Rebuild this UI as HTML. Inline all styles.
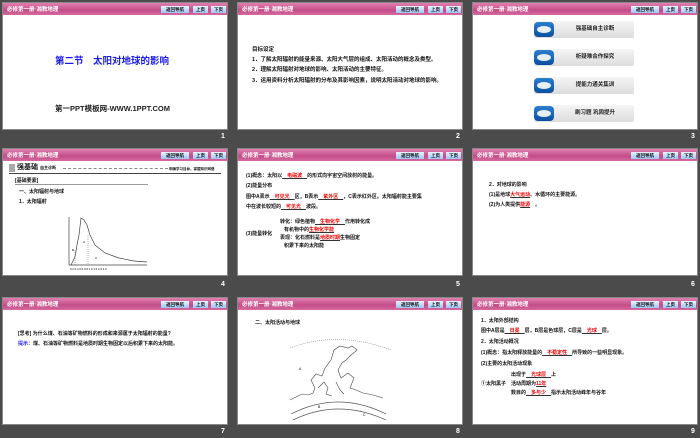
<!DOCTYPE html>
<html><head><meta charset="utf-8"><style>
*{margin:0;padding:0;box-sizing:border-box}
body{width:700px;height:438px;background:#4b4b4b;position:relative;overflow:hidden;font-family:"Liberation Sans","Noto Sans CJK SC",sans-serif}
.s{position:absolute;width:226px;height:128px;background:#fff;overflow:hidden;border:1px solid #888}
.h{position:absolute;left:0;top:0;width:100%;height:12px;background:linear-gradient(#e27fb0,#c24d88 60%,#d76aa1);}
.h .t{position:absolute;left:4px;top:2px;font-size:5.5px;color:#fff;font-weight:bold;white-space:nowrap}
.b{position:absolute;top:3px;height:7px;background:linear-gradient(#eaf3ff,#9cc4f2);font-size:4.5px;line-height:7px;text-align:center;color:#111;font-weight:bold}
.n{position:absolute;color:#fff;font-size:7px;font-weight:bold}
.x{position:absolute;font-size:5px;color:#111;white-space:nowrap;font-weight:bold;line-height:6px}
.r{color:#e00;text-decoration:underline;text-decoration-color:#333}
.btn{position:absolute;left:61px;width:100px;height:17px;background:linear-gradient(#f5f5f5,#ddd);border-radius:2px;font-size:5.5px;font-weight:bold;line-height:17px;color:#222}
.btn i{position:absolute;left:0;top:1px;width:20px;height:15px;border-radius:4px;background:linear-gradient(#2b7fd0,#0d4fa0)}
.btn i:after{content:"";position:absolute;left:3px;top:4px;width:14px;height:7px;border-radius:50%;background:#e8eef6}
.btn span{position:absolute;left:22px;right:0;text-align:center}
</style></head><body>

<!-- slide 1 -->
<div class="s" style="left:2px;top:2px">
<div class="h"><div class="t">必修第一册·湘教地理</div></div>
<div class="b" style="left:158px;width:28px">返回导航</div><div class="b" style="left:190px;width:15px">上页</div><div class="b" style="left:208px;width:15px">下页</div>
<div class="x" style="left:52px;top:53px;font-size:9.5px;line-height:11px;color:#1a1aee">第二节　太阳对地球的影响</div>
<div class="x" style="left:52px;top:101px;font-size:7.5px;line-height:9px;color:#222">第一PPT模板网-WWW.1PPT.COM</div>
</div>
<div class="n" style="left:221px;top:133px">1</div>

<!-- slide 2 -->
<div class="s" style="left:237px;top:2px">
<div class="h"><div class="t">必修第一册·湘教地理</div></div>
<div class="b" style="left:158px;width:28px">返回导航</div><div class="b" style="left:190px;width:15px">上页</div><div class="b" style="left:208px;width:15px">下页</div>
<div class="x" style="left:14px;top:44px;font-size:5.5px">目标设定</div>
<div class="x" style="left:14px;top:54px;font-size:5.5px">1．了解太阳辐射的能量来源、太阳大气层的组成、太阳活动的概念及类型。</div>
<div class="x" style="left:14px;top:64px;font-size:5.5px">2．理解太阳辐射对地球的影响、太阳活动的主要特征。</div>
<div class="x" style="left:14px;top:75px;font-size:5.5px">3．运用资料分析太阳辐射的分布及其影响因素，说明太阳活动对地球的影响。</div>
</div>
<div class="n" style="left:456px;top:133px">2</div>

<!-- slide 3 -->
<div class="s" style="left:472px;top:2px">
<div class="h"><div class="t">必修第一册·湘教地理</div></div>
<div class="b" style="left:158px;width:28px">返回导航</div><div class="b" style="left:190px;width:15px">上页</div><div class="b" style="left:208px;width:15px">下页</div>
<div class="btn" style="top:18px"><i></i><span>强基础自主诊断</span></div>
<div class="btn" style="top:46px"><i></i><span>析疑难合作探究</span></div>
<div class="btn" style="top:74px"><i></i><span>提能力通关集训</span></div>
<div class="btn" style="top:102px"><i></i><span>刷习题 巩固提升</span></div>
</div>
<div class="n" style="left:691px;top:133px">3</div>

<!-- slide 4 -->
<div class="s" style="left:2px;top:148px">
<div class="h"><div class="t">必修第一册·湘教地理</div></div>
<div class="b" style="left:158px;width:28px">返回导航</div><div class="b" style="left:190px;width:15px">上页</div><div class="b" style="left:208px;width:15px">下页</div>
<div style="position:absolute;left:6px;top:15px;width:6px;height:8px;background:#aaa"></div>
<div class="x" style="left:14px;top:15px;font-size:7px;line-height:8px">强基础 <span style="font-size:4px">自主诊断</span></div>
<div style="position:absolute;left:6px;top:24px;width:212px;height:1px;background:#444"></div>
<div style="position:absolute;left:60px;top:19px;width:105px;border-top:1px dashed #888"></div>
<div class="x" style="left:166px;top:17px;font-size:3.5px">明确学习目标，掌握知识网络</div>
<div class="x" style="left:12px;top:29px">[基础要素]</div>
<div style="position:absolute;left:12px;top:35px;width:133px;height:1px;background:#999"></div>
<div class="x" style="left:16px;top:40px">一、太阳辐射与地球</div>
<div class="x" style="left:16px;top:50px">1．太阳辐射</div>
<svg style="position:absolute;left:56px;top:66px" width="100" height="60">
<path d="M10 2V50H88" stroke="#444" fill="none" stroke-width=".7"/>
<path d="M12 50 L16 42 L18 30 L20 20 L22 3 L25 5 L28 10 L31 20 L36 30 L46 38 L60 43 L75 46 L88 47" stroke="#444" fill="none" stroke-width=".7"/>
<path d="M16 35V50M29 20V50" stroke="#666" stroke-dasharray="1 1" stroke-width=".5"/>
<text x="24" y="28" font-size="3">A</text><text x="13" y="36" font-size="3">B</text><text x="36" y="44" font-size="3">C</text>
<text x="11" y="55" font-size="2.8">0.2 0.4 0.6 0.8 1.0  1.5  2.0        3.0</text>
</svg>
</div>
<div class="n" style="left:221px;top:281px">4</div>

<!-- slide 5 -->
<div class="s" style="left:237px;top:148px">
<div class="h"><div class="t">必修第一册·湘教地理</div></div>
<div class="b" style="left:158px;width:28px">返回导航</div><div class="b" style="left:190px;width:15px">上页</div><div class="b" style="left:208px;width:15px">下页</div>
<div class="x" style="left:8px;top:24px">(1)概念：太阳以<span class="r">　电磁波　</span>的形式向宇宙空间放射的能量。</div>
<div class="x" style="left:8px;top:34px">(2)能量分布</div>
<div class="x" style="left:8px;top:45px">图中A表示<span class="r">　可见光　</span>区，B表示<span class="r">　紫外区　</span>，C表示红外区。太阳辐射能主要集</div>
<div class="x" style="left:8px;top:55px">中在波长较短的<span class="r">　可见光　</span>波段。</div>
<div class="x" style="left:8px;top:82px">(3)能量转化</div>
<div class="x" style="left:42px;top:70px">转化：绿色植物<span class="r">　生物化学　</span>作用转化成</div>
<div class="x" style="left:46px;top:78px">有机物中的<span class="r">生物化学能</span></div>
<div class="x" style="left:42px;top:86px">表现：化石燃料是<span class="r">地质时期</span>生物固定</div>
<div class="x" style="left:46px;top:94px">积累下来的太阳能</div>
</div>
<div class="n" style="left:456px;top:281px">5</div>

<!-- slide 6 -->
<div class="s" style="left:472px;top:148px">
<div class="h"><div class="t">必修第一册·湘教地理</div></div>
<div class="b" style="left:158px;width:28px">返回导航</div><div class="b" style="left:190px;width:15px">上页</div><div class="b" style="left:208px;width:15px">下页</div>
<div class="x" style="left:16px;top:33px">2．对地球的影响</div>
<div class="x" style="left:16px;top:43px">(1)是地球<span class="r">大气运动</span>、水循环的主要能源。</div>
<div class="x" style="left:16px;top:53px">(2)为人类提供<span class="r">能源</span>　。</div>
</div>
<div class="n" style="left:691px;top:281px">6</div>

<!-- slide 7 -->
<div class="s" style="left:2px;top:297px">
<div class="h"><div class="t">必修第一册·湘教地理</div></div>
<div class="b" style="left:158px;width:28px">返回导航</div><div class="b" style="left:190px;width:15px">上页</div><div class="b" style="left:208px;width:15px">下页</div>
<div class="x" style="left:15px;top:33px">[思考] 为什么煤、石油等矿物燃料的形成和来源属于太阳辐射的能量?</div>
<div class="x" style="left:15px;top:43px"><span style="color:#22e">提示：</span>煤、石油等矿物燃料是地质时期生物固定以后积累下来的太阳能。</div>
</div>
<div class="n" style="left:221px;top:428px">7</div>

<!-- slide 8 -->
<div class="s" style="left:237px;top:297px">
<div class="h"><div class="t">必修第一册·湘教地理</div></div>
<div class="b" style="left:158px;width:28px">返回导航</div><div class="b" style="left:190px;width:15px">上页</div><div class="b" style="left:208px;width:15px">下页</div>
<div class="x" style="left:17px;top:22px">二、太阳活动与地球</div>
<svg style="position:absolute;left:50px;top:40px" width="110" height="82">
<path d="M2 10 Q50 -8 103 12" stroke="#888" fill="none" stroke-dasharray="1 1" stroke-width=".6"/>
<path d="M3 76 Q50 52 98 76" stroke="#555" fill="none" stroke-width=".7"/>
<path d="M5 82 Q50 60 98 82" stroke="#555" fill="none" stroke-width=".7"/>
<path d="M2 62 L10 58 L14 56 L20 57 L25 55 L27 50 L23 42 L28 36 L34 38 L37 30 L43 22 L46 12 L52 8 L60 10 L64 8 L69 12 L62 18 L58 22 L54 25 L50 32 L53 40 L60 35 L66 40 L62 50 L68 52 L75 55 L85 57 L95 60" stroke="#444" fill="none" stroke-width=".6"/>
<path d="M30 50 L36 44 L40 50 L38 56 L44 58 M48 44 L52 52 L56 56" stroke="#444" fill="none" stroke-width=".6"/>
<text x="11" y="32" font-size="3.5">A</text><text x="30" y="70" font-size="3.5">B</text><text x="75" y="78" font-size="3.5">C</text>
</svg>
</div>
<div class="n" style="left:456px;top:428px">8</div>

<!-- slide 9 -->
<div class="s" style="left:472px;top:297px">
<div class="h"><div class="t">必修第一册·湘教地理</div></div>
<div class="b" style="left:158px;width:28px">返回导航</div><div class="b" style="left:190px;width:15px">上页</div><div class="b" style="left:208px;width:15px">下页</div>
<div class="x" style="left:8px;top:20px">1．太阳外部结构</div>
<div class="x" style="left:8px;top:30px">图中A层是<span class="r">　日冕　</span>层，B层是色球层，C层是<span class="r">　光球　</span>层。</div>
<div class="x" style="left:8px;top:41px">2．太阳活动概况</div>
<div class="x" style="left:8px;top:52px">(1)概念：指太阳释放能量的<span class="r">　不稳定性　</span>所导致的一些明显现象。</div>
<div class="x" style="left:8px;top:63px">(2)主要的太阳活动现象</div>
<div class="x" style="left:8px;top:83px">①太阳黑子</div>
<div class="x" style="left:38px;top:74px">出现于<span class="r">　光球层　</span>上</div>
<div class="x" style="left:38px;top:83px">活动周期为<span class="r">11年</span></div>
<div class="x" style="left:38px;top:92px">数目的<span class="r">　多与少　</span>指示太阳活动峰年与谷年</div>
</div>
<div class="n" style="left:691px;top:428px">9</div>
</body></html>
